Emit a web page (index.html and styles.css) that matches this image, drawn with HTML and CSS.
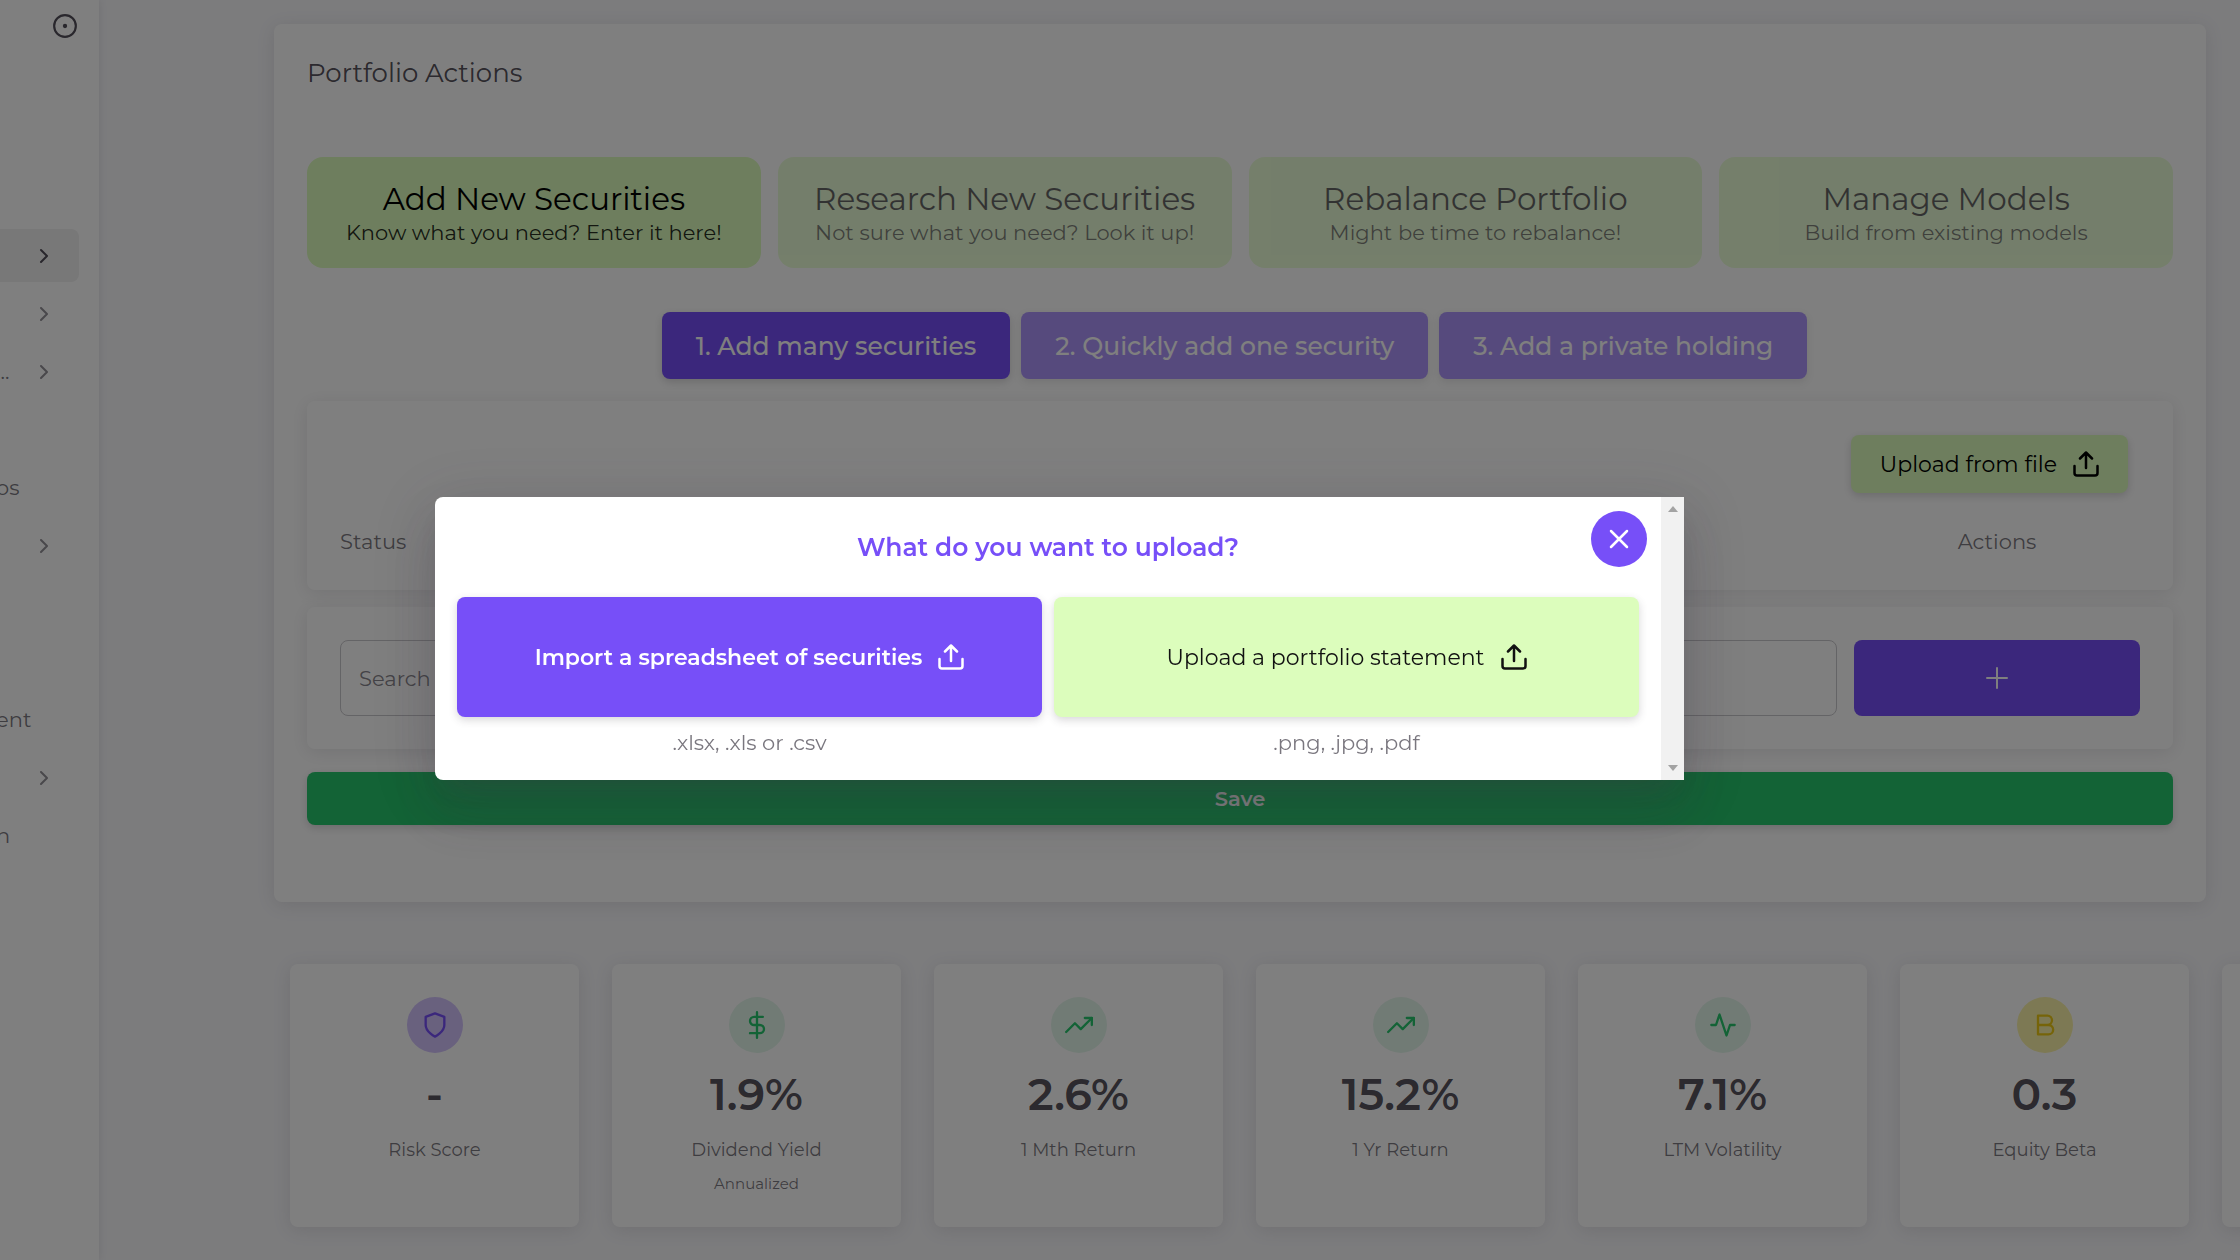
FILE: index.html
```html
<!DOCTYPE html>
<html lang="en">
<head>
<meta charset="utf-8">
<meta name="viewport" content="width=device-width, initial-scale=1">
<title>Portfolio Actions</title>
<link rel="stylesheet" href="styles.css">
</head>
<body>
<svg class="sprite" aria-hidden="true">
  <symbol id="chevron" viewBox="0 0 24 24"><path d="m9 18 6-6-6-6"/></symbol>
  <symbol id="upload" viewBox="0 0 26 26"><path d="M13 17V2M7 7.500 13 1.500 19 7.500M1.500 15v7a2.500 2.500 0 0 0 2.500 2.500h18a2.500 2.500 0 0 0 2.500-2.500v-7"/></symbol>
  <symbol id="trend" viewBox="0 0 24 24"><path d="M23 6l-9.500 9.500-5-5L1 18"/><path d="M17 6h6v6"/></symbol>
  <symbol id="shield" viewBox="0 0 24 24"><path d="M12 22s8-4 8-10V5l-8-3-8 3v7c0 6 8 10 8 10z"/></symbol>
  <symbol id="dollar" viewBox="0 0 24 24"><path d="M12 1v22M17 5H9.500a3.500 3.500 0 0 0 0 7h5a3.500 3.500 0 0 1 0 7H6"/></symbol>
  <symbol id="pulse" viewBox="0 0 24 24"><path d="M22 12h-4l-3 9L9 3l-3 9H2"/></symbol>
  <symbol id="beta" viewBox="0 0 24 24"><path d="M6 4h8a4 4 0 0 1 0 8H6zM6 12h9a4 4 0 0 1 0 8H6z"/></symbol>
</svg>

<div class="app">
  <aside class="sidebar">
    <div class="sidebar-head">
      <button class="pin" type="button" aria-label="Pin menu"><svg viewBox="0 0 24 24"><circle cx="12" cy="12" r="10"/><circle class="dot" cx="12" cy="12" r="2"/></svg></button>
    </div>
    <nav class="nav" aria-label="Main">
      <a class="nav-item active" href="#"><svg class="chev"><use href="#chevron"/></svg></a>
      <a class="nav-item" href="#"><svg class="chev"><use href="#chevron"/></svg></a>
      <a class="nav-item" href="#"><span>...</span><svg class="chev"><use href="#chevron"/></svg></a>
      <a class="nav-item" href="#"></a>
      <a class="nav-item" href="#"><span>os</span></a>
      <a class="nav-item" href="#"><svg class="chev"><use href="#chevron"/></svg></a>
      <a class="nav-item" href="#"></a>
      <a class="nav-item" href="#"></a>
      <a class="nav-item" href="#"><span>ent</span></a>
      <a class="nav-item" href="#"><svg class="chev"><use href="#chevron"/></svg></a>
      <a class="nav-item" href="#"><span>n</span></a>
    </nav>
  </aside>

  <main class="main">
    <section class="card portfolio">
      <h1 class="card-title">Portfolio Actions</h1>

      <div class="actions">
        <button class="action active" type="button"><span class="action-name">Add New Securities</span><span class="action-note">Know what you need? Enter it here!</span></button>
        <button class="action" type="button"><span class="action-name">Research New Securities</span><span class="action-note">Not sure what you need? Look it up!</span></button>
        <button class="action" type="button"><span class="action-name">Rebalance Portfolio</span><span class="action-note">Might be time to rebalance!</span></button>
        <button class="action" type="button"><span class="action-name">Manage Models</span><span class="action-note">Build from existing models</span></button>
      </div>

      <div class="steps">
        <button class="step active" type="button">1. Add many securities</button>
        <button class="step" type="button">2. Quickly add one security</button>
        <button class="step" type="button">3. Add a private holding</button>
      </div>

      <div class="card panel">
        <div class="panel-tools">
          <button class="upload" type="button">Upload from file <svg class="upload-icon"><use href="#upload"/></svg></button>
        </div>
        <table class="holdings">
          <thead><tr><th class="col-status" scope="col">Status</th><th class="col-actions" scope="col">Actions</th></tr></thead>
        </table>
      </div>

      <div class="card search-row">
        <input class="search" type="text" placeholder="Search" aria-label="Search securities">
        <button class="add" type="button" aria-label="Add security"><svg viewBox="0 0 24 24"><path d="M12 2v20M2 12h20"/></svg></button>
      </div>

      <button class="save" type="button">Save</button>
    </section>

    <section class="stats" aria-label="Portfolio statistics">
      <article class="card stat"><span class="badge violet"><svg><use href="#shield"/></svg></span><strong class="value">-</strong><span class="label">Risk Score</span></article>
      <article class="card stat"><span class="badge green"><svg><use href="#dollar"/></svg></span><strong class="value">1.9%</strong><span class="label">Dividend Yield</span><span class="hint">Annualized</span></article>
      <article class="card stat"><span class="badge green"><svg><use href="#trend"/></svg></span><strong class="value">2.6%</strong><span class="label">1 Mth Return</span></article>
      <article class="card stat"><span class="badge green"><svg><use href="#trend"/></svg></span><strong class="value">15.2%</strong><span class="label">1 Yr Return</span></article>
      <article class="card stat"><span class="badge green"><svg><use href="#pulse"/></svg></span><strong class="value">7.1%</strong><span class="label">LTM Volatility</span></article>
      <article class="card stat"><span class="badge yellow"><svg><use href="#beta"/></svg></span><strong class="value">0.3</strong><span class="label">Equity Beta</span></article>
      <article class="card stat"></article>
    </section>
  </main>
</div>

<div class="backdrop">
  <div class="dialog" role="dialog" aria-modal="true" aria-labelledby="dialog-title">
    <div class="dialog-body">
      <h2 class="dialog-title" id="dialog-title">What do you want to upload?</h2>
      <button class="close" type="button" aria-label="Close"><svg viewBox="0 0 24 24"><path d="M4 4l16 16M20 4 4 20"/></svg></button>
      <div class="choices">
        <div class="choice">
          <button class="choice-button primary" type="button">Import a spreadsheet of securities <svg class="upload-icon"><use href="#upload"/></svg></button>
          <p class="formats">.xlsx, .xls or .csv</p>
        </div>
        <div class="choice">
          <button class="choice-button lime" type="button">Upload a portfolio statement <svg class="upload-icon"><use href="#upload"/></svg></button>
          <p class="formats">.png, .jpg, .pdf</p>
        </div>
      </div>
    </div>
    <div class="scrollbar" aria-hidden="true"><span class="arrow up"></span><span class="arrow down"></span></div>
  </div>
</div>
</body>
</html>
```
FILE: styles.css
```css
:root {
  --violet: #774ff8;
  --lime: #dcfdbc;
  --green: #26c66c;
  --text: rgba(58, 53, 65, 0.87);
  --muted: rgba(58, 53, 65, 0.68);
  --radius: 8px;
  --card-shadow: 0 3px 18px rgba(58, 53, 65, 0.12);
  --button-shadow: 0 3px 8px rgba(58, 53, 65, 0.2);
}

* { box-sizing: border-box; }

body {
  margin: 0;
  height: 100vh;
  overflow: hidden;
  background: #f8f8fb;
  color: var(--text);
  font-family: Montserrat, Inter, "Open Sans", sans-serif;
  font-size: 21px;
}

button, input { font: inherit; }
button { border: 0; padding: 0; cursor: pointer; }

svg {
  fill: none;
  stroke: currentColor;
  stroke-width: 2;
  stroke-linecap: round;
  stroke-linejoin: round;
}

.sprite { display: none; }

.app { display: flex; height: 100%; }

/* Sidebar */
.sidebar {
  flex: 0 0 99px;
  background: #fff;
  box-shadow: 0 0 8px rgba(58, 53, 65, 0.12);
}

.sidebar-head {
  display: flex;
  justify-content: flex-end;
  height: 229px;
  padding: 13px 21px;
}

.pin { width: 26px; height: 26px; background: none; color: var(--text); }
.pin svg { display: block; }
.pin .dot { fill: currentColor; stroke: none; }

/* Labels are cut off by the left edge of the window */
.nav { display: flex; flex-direction: column; gap: 5px; margin-left: -4px; padding-right: 20px; }

.nav-item {
  display: flex;
  align-items: center;
  height: 53px;
  padding-right: 23px;
  border-radius: 0 var(--radius) var(--radius) 0;
  color: var(--muted);
  line-height: 32px;
  text-decoration: none;
}

.nav-item.active { background: #f0f0f0; color: var(--text); }
.chev { width: 24px; height: 24px; margin-left: auto; opacity: 0.8; }
.active .chev { opacity: 1; }

/* Content */
.main { flex: 1; min-width: 0; overflow: hidden; padding: 24px 34px 32px 175px; }

.card {
  background: #fff;
  border-radius: var(--radius);
  box-shadow: var(--card-shadow);
}

.portfolio { padding: 31px 33px 77px; }

.card-title { margin: 0 0 66px; font-size: 26px; font-weight: 400; line-height: 36px; }

.actions { display: grid; grid-template-columns: repeat(4, 1fr); gap: 17px; }

.action {
  display: flex;
  flex-direction: column;
  align-items: center;
  padding: 22px 8px 21px;
  border-radius: 16px;
  background: var(--lime);
  color: #000;
  opacity: 0.6;
}

.action.active, .step.active { opacity: 1; }
.action-name { font-size: 31px; line-height: 40px; }
.action-note { color: rgba(0, 0, 0, 0.84); line-height: 28px; }

.steps { display: flex; justify-content: center; margin: 44px 0 22px; }

.step {
  height: 67px;
  margin-right: 11px;
  padding: 0 34px;
  border-radius: var(--radius);
  background: var(--violet);
  box-shadow: var(--button-shadow);
  color: #fff;
  font-size: 25px;
  font-weight: 500;
  opacity: 0.6;
}

.panel { margin-bottom: 17px; padding: 34px 33px 32px; }
.panel-tools { display: flex; justify-content: flex-end; padding: 0 12px 33px; }

.upload {
  display: flex;
  align-items: center;
  gap: 16px;
  height: 58px;
  padding: 0 29px;
  border-radius: var(--radius);
  background: var(--lime);
  box-shadow: var(--button-shadow);
  color: #000;
  font-size: 22px;
}

.upload-icon { width: 26px; height: 26px; flex: none; stroke-width: 2.5; }

.holdings { width: 100%; border-collapse: collapse; table-layout: fixed; }
.holdings th { padding: 0; color: var(--muted); font-weight: 400; line-height: 32px; }
.holdings .col-status { text-align: left; }
.holdings .col-actions { width: 286px; text-align: center; }

.search-row { display: flex; gap: 17px; margin-bottom: 23px; padding: 33px; }

.search {
  flex: 1;
  min-width: 0;
  height: 76px;
  padding: 0 18px;
  border: 1px solid #c9c8cc;
  border-radius: var(--radius);
  background: transparent;
  color: var(--text);
}

.search::placeholder { color: var(--muted); opacity: 0.9; }

.add {
  display: flex;
  align-items: center;
  justify-content: center;
  width: 286px;
  height: 76px;
  border-radius: var(--radius);
  background: var(--violet);
  color: #fff;
}

.add svg { width: 24px; height: 24px; }

.save {
  width: 100%;
  height: 53px;
  border-radius: var(--radius);
  background: var(--green);
  box-shadow: var(--button-shadow);
  color: #fff;
  font-weight: 600;
}

/* Statistic cards run past the right edge of the window */
.stats { display: flex; gap: 33px; margin: 62px -34px 0 16px; }

.stat {
  display: flex;
  flex: 0 0 289px;
  flex-direction: column;
  align-items: center;
  height: 263px;
  padding-top: 33px;
}

.badge {
  display: flex;
  align-items: center;
  justify-content: center;
  width: 56px;
  height: 56px;
  border-radius: 50%;
}

.badge svg { width: 28px; height: 28px; }
.violet { background: #d2c2fd; color: var(--violet); }
.green { background: #e3f6eb; color: var(--green); }
.yellow { background: #fbf2a8; color: #ecc913; }

.value { margin: 17px 0 18px; font-size: 44px; font-weight: 600; line-height: 48px; }
.label { color: var(--muted); font-size: 18px; line-height: 28px; }
.hint { margin-top: 8px; color: var(--muted); font-size: 15px; line-height: 24px; }

/* Upload dialog */
.backdrop {
  position: fixed;
  inset: 0;
  display: flex;
  align-items: center;
  justify-content: center;
  padding: 17px 121px 0 0;
  background: rgba(0, 0, 0, 0.5);
}

.dialog {
  position: relative;
  display: flex;
  width: 1249px;
  max-width: 100%;
  overflow: hidden;
  border-radius: var(--radius) 0 0 var(--radius);
  background: #fff;
  box-shadow: 0 16px 22px -10px rgba(58, 53, 65, 0.2), 0 34px 54px 4px rgba(58, 53, 65, 0.14), 0 12px 66px 12px rgba(58, 53, 65, 0.12);
}

.dialog-body { flex: 1; min-width: 0; padding: 32px 22px 21px; }

.dialog-title {
  margin: 0 0 32px;
  color: var(--violet);
  font-size: 25px;
  font-weight: 600;
  line-height: 36px;
  text-align: center;
}

.close {
  position: absolute;
  top: 14px;
  right: 37px;
  display: flex;
  align-items: center;
  justify-content: center;
  width: 56px;
  height: 56px;
  border-radius: 50%;
  background: var(--violet);
  color: #fff;
}

.close svg { width: 24px; height: 24px; stroke-width: 2.5; }

.choices { display: grid; grid-template-columns: 1fr 1fr; gap: 12px; }

.choice-button {
  display: flex;
  align-items: center;
  justify-content: center;
  gap: 16px;
  width: 100%;
  height: 120px;
  border-radius: var(--radius);
  box-shadow: var(--button-shadow);
  font-size: 22px;
}

.primary { background: var(--violet); color: #fff; font-weight: 600; }
.lime { background: var(--lime); color: #111; }

.formats {
  margin: 10px 0 0;
  color: var(--muted);
  line-height: 32px;
  text-align: center;
}

.scrollbar {
  display: flex;
  flex: 0 0 23px;
  flex-direction: column;
  align-items: center;
  justify-content: space-between;
  padding: 9px 0;
  background: #f1f1f1;
}

.arrow { border: 5px solid transparent; }
.arrow.up { border-top: 0; border-bottom: 6px solid #a3a3a3; }
.arrow.down { border-bottom: 0; border-top: 6px solid #a3a3a3; }
```
